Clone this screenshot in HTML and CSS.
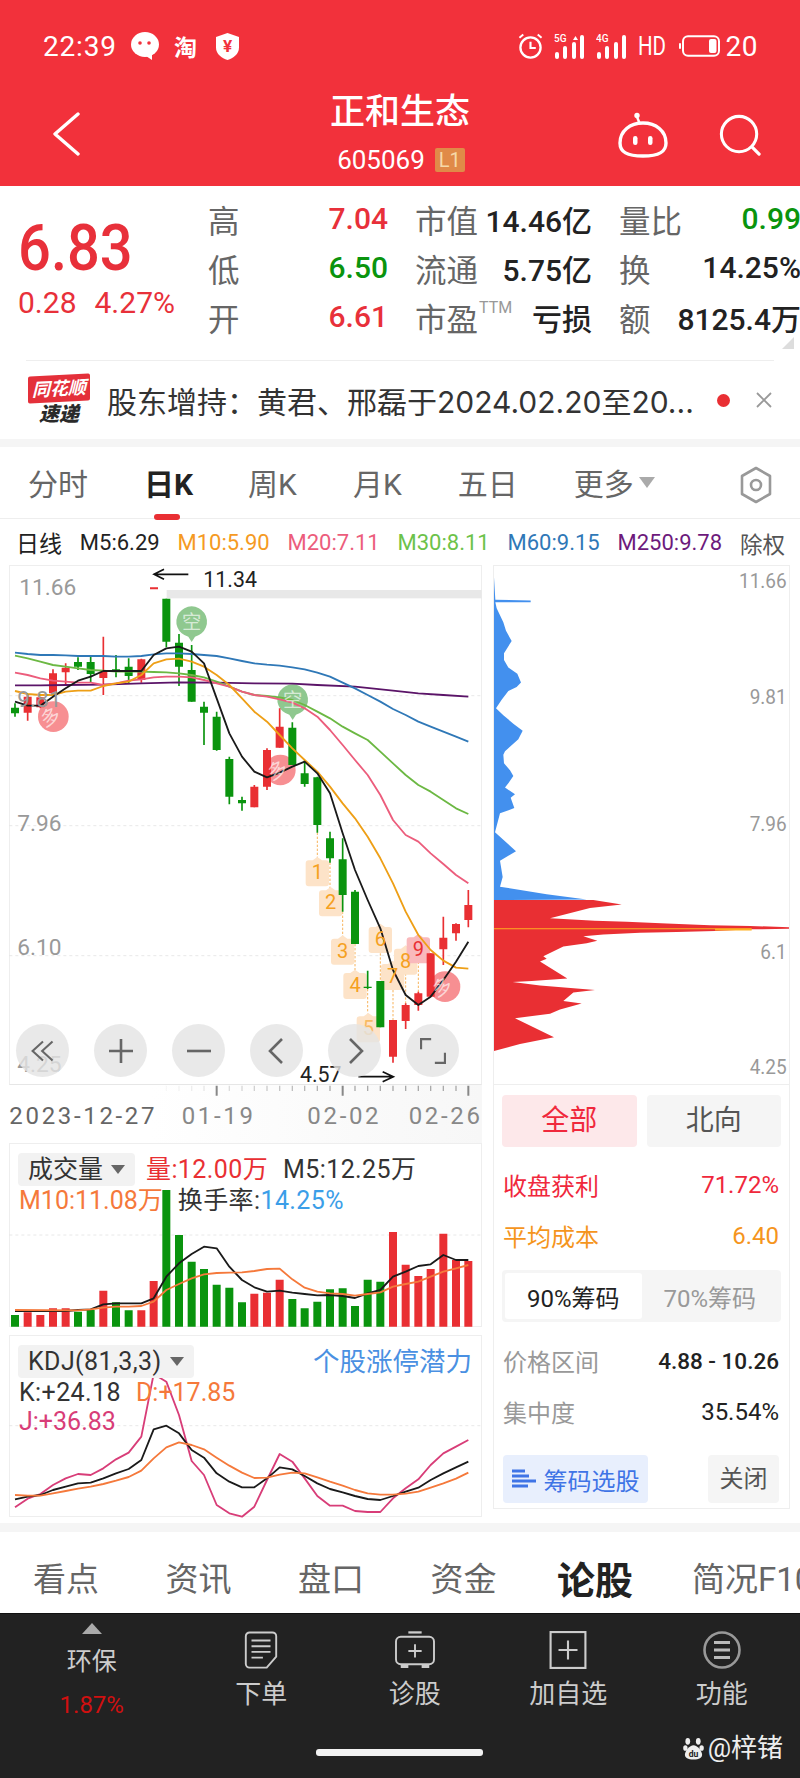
FILE: index.html
```html
<!DOCTYPE html>
<html lang="zh-CN">
<head>
<meta charset="utf-8">
<title>正和生态 605069</title>
<link rel="stylesheet" href="styles.css">
</head>
<body>
<div class="phone">

  <header class="top">
    <div class="status">
      <div class="status-left">
        <span class="clock">22:39</span>
        <svg class="ic-chat" viewBox="0 0 28 28"><ellipse cx="14" cy="12.5" rx="14" ry="12.5" fill="#fff"/><path d="M15 24l6 4v-6z" fill="#fff"/><circle cx="9" cy="11" r="1.8" fill="#f2313b"/><circle cx="18" cy="11" r="1.8" fill="#f2313b"/></svg>
        <span class="tao">淘</span>
        <svg class="ic-shield" viewBox="0 0 24 28"><path d="M12 0l12 4v11c0 7-6 11-12 13C6 26 0 22 0 15V4z" fill="#fff"/><text x="12" y="20" text-anchor="middle" class="shield-mark">¥</text></svg>
      </div>
      <div class="status-right">
        <svg class="ic-alarm" viewBox="0 0 26 28"><circle cx="13" cy="15" r="10.5" fill="none" stroke="#fff" stroke-width="2.4"/><path d="M13 9v6.500h5.500" fill="none" stroke="#fff" stroke-width="2.2"/><path d="M1.500 5l4-3.500M24.500 5l-4-3.500" stroke="#fff" stroke-width="2" fill="none"/></svg>
        <svg class="ic-signal" viewBox="0 0 31 26"><text x="0" y="9" class="net-mark">5G</text><path d="M19 7l2.500-4 2.500 4z" fill="#fff"/><rect x="1" y="19" width="4" height="7" rx="2" fill="#fff"/><rect x="9" y="13" width="4" height="13" rx="2" fill="#fff"/><rect x="18" y="9" width="4" height="17" rx="2" fill="#fff"/><rect x="26" y="2" width="4" height="24" rx="2" fill="#fff"/></svg>
        <svg class="ic-signal" viewBox="0 0 31 26"><text x="0" y="9" class="net-mark">4G</text><rect x="1" y="19" width="4" height="7" rx="2" fill="#fff"/><rect x="9" y="13" width="4" height="13" rx="2" fill="#fff"/><rect x="18" y="9" width="4" height="17" rx="2" fill="#fff"/><rect x="26" y="2" width="4" height="24" rx="2" fill="#fff"/></svg>
        <span class="hd">HD</span>
        <svg class="ic-battery" viewBox="0 0 41 22"><rect x="0" y="8" width="2" height="6" rx="1" fill="#fff"/><rect x="4" y="1.200" width="36" height="19.600" rx="5" fill="none" stroke="#fff" stroke-width="2"/><rect x="30" y="4" width="7.500" height="14" rx="2" fill="#fff"/></svg>
        <span class="charge">20</span>
      </div>
    </div>
    <nav class="titlebar">
      <svg class="ic-back" viewBox="0 0 28 44"><path d="M26 2L3 22l23 20" fill="none" stroke="#fff" stroke-width="3.400" stroke-linecap="round" stroke-linejoin="round"/></svg>
      <div class="title-block">
        <div class="stock-name">正和生态</div>
        <div class="stock-code">605069<span class="level">L1</span></div>
      </div>
      <div class="title-actions">
        <svg class="ic-robot" viewBox="0 0 50 46"><circle cx="19" cy="3.500" r="2.700" fill="#fff"/><path d="M19 5l3 7" stroke="#fff" stroke-width="2.400"/><path d="M25 11c13 0 23 8 23 20 0 9-7 13-23 13S2 40 2 31c0-12 10-20 23-20z" fill="none" stroke="#fff" stroke-width="3.400"/><rect x="15" y="24" width="4.500" height="9" rx="2.200" fill="#fff"/><rect x="30" y="24" width="4.500" height="9" rx="2.200" fill="#fff"/></svg>
        <svg class="ic-search" viewBox="0 0 44 44"><circle cx="21" cy="21" r="18.500" fill="none" stroke="#fff" stroke-width="3.200"/><path d="M35 35l7 7" stroke="#fff" stroke-width="3.400" stroke-linecap="round"/></svg>
      </div>
    </nav>
  </header>

  <section class="quote">
    <div class="price-block">
      <div class="price">6.83</div>
      <div class="change"><span>0.28</span><span>4.27%</span></div>
    </div>
    <div class="stats">
      <div class="stat"><span class="label">高</span><span class="rise">7.04</span></div>
      <div class="stat"><span class="label">市值</span><span class="plain">14.46亿</span></div>
      <div class="stat"><span class="label">量比</span><span class="fall">0.99</span></div>
      <div class="stat"><span class="label">低</span><span class="fall">6.50</span></div>
      <div class="stat"><span class="label">流通</span><span class="plain">5.75亿</span></div>
      <div class="stat"><span class="label">换</span><span class="plain">14.25%</span></div>
      <div class="stat"><span class="label">开</span><span class="rise">6.61</span></div>
      <div class="stat"><span class="label">市盈<sup class="ttm">TTM</sup></span><span class="plain">亏损</span></div>
      <div class="stat"><span class="label">额</span><span class="plain">8125.4万</span></div>
    </div>
    <i class="expand-mark"></i>
  </section>

  <section class="notice">
    <div class="notice-inner">
      <div class="brand"><span class="brand-flag">同花顺</span><span class="brand-word">速递</span></div>
      <div class="notice-text">股东增持&#xFF1A;黄君、邢磊于2024.02.20至20...</div>
      <i class="notice-dot"></i>
      <svg class="notice-close" viewBox="0 0 18 18"><path d="M2 2l14 14M16 2L2 16" stroke="#999" stroke-width="1.800"/></svg>
    </div>
  </section>

  <div class="strip"></div>

  <nav class="period-tabs">
    <span class="period">分时</span>
    <span class="period is-active">日K</span>
    <span class="period">周K</span>
    <span class="period">月K</span>
    <span class="period">五日</span>
    <span class="period">更多<i class="more-caret"></i></span>
    <svg class="ic-hex" viewBox="0 0 34 38"><path d="M17 2l14 8v18l-14 8-14-8V10z" fill="none" stroke="#999" stroke-width="2.600" stroke-linejoin="round"/><circle cx="17" cy="19" r="5" fill="none" stroke="#999" stroke-width="2.600"/></svg>
  </nav>

  <div class="ma-row">
    <span class="ma-title">日线</span>
    <span class="ma m5">M5:6.29</span>
    <span class="ma m10">M10:5.90</span>
    <span class="ma m20">M20:7.11</span>
    <span class="ma m30">M30:8.11</span>
    <span class="ma m60">M60:9.15</span>
    <span class="ma m250">M250:9.78</span>
    <span class="ma-adjust">除权</span>
  </div>

  <main class="chart-area">
    <div class="chart-left">
      <div class="panel kline">
        <svg class="plot" viewBox="30 18 1413 1554">
          <defs>
            <path id="td" d="M0-46L14-36H26Q35-36 35-27V33Q35 42 26 42H-26Q-35 42-35 33V-27Q-35-36-26-36H-14Z"/>
            <path id="bubble" d="M0 60L-10 44A46 46 0 1 1 10 44Z"/>
          </defs>

          <rect x="500" y="90" width="945" height="25" fill="#e8e8e8"/>
          <path class="grid" d="M28 407H1445M28 797H1445M28 1187H1445"/>

          <g class="buy"><circle cx="160" cy="470" r="46"/><circle cx="841" cy="630" r="46"/><circle cx="1335" cy="1280" r="46"/></g>
          <g class="sell"><use href="#bubble" x="575" y="186"/><use href="#bubble" x="878" y="420"/></g>

          <path class="td-guide" d="M952 818V895M990 908V985M1028 1055V1130M1065 1152V1230M1103 1287V1360M1141 1180V1263M1179 1290V1380M1217 1240V1335M1255 1205V1300"/>
          <g class="td-box">
            <use href="#td" x="952" y="937"/><use href="#td" x="992" y="1027"/><use href="#td" x="1028" y="1172"/>
            <use href="#td" x="1065" y="1275"/><use href="#td" x="1105" y="1405"/><use href="#td" x="1141" y="1137"/>
            <use href="#td" x="1178" y="1248"/><use href="#td" x="1217" y="1202"/>
            <use href="#td" x="1255" y="1168" class="td-top"/>
          </g>

          <!-- falling sessions -->
          <path class="wick-down" d="M45 430V470M234 292V330M272 290V368M348 285V352M386 295V370M499 116V262M537 222V378M575 255V425M612 425V555M650 455V572M688 590V733M726 710V752M877 487V615M914 600V680M952 650V818M990 815V908M1028 835V1055M1065 990V1152M1103 1232V1287M1141 1263V1402"/>
          <path class="body-down" d="M33 443h24v17h-24zM222 306h24v14h-24zM260 306h24v36h-24zM336 328h24v6h-24zM374 320h24v28h-24zM487 116h24v129h-24zM525 248h24v72h-24zM563 330h24v95h-24zM600 440h24v18h-24zM638 470h24v100h-24zM676 597h24v113h-24zM714 720h24v10h-24zM865 503h24v112h-24zM902 640h24v32h-24zM940 652h24v143h-24zM978 835h24v60h-24zM1016 898h24v107h-24zM1053 995h24v157h-24zM1091 1280h24v4h-24zM1129 1263h24v139h-24z"/>
          <!-- rising sessions -->
          <path class="wick-up" d="M83 405V482M121 410V445M159 328V410M197 310V372M310 230V405M424 296V368M763 675V742M801 565V690M839 445V563M1179 1380V1508M1217 1330V1407M1255 1295V1352M1292 1180V1310M1330 1070V1215M1368 1090V1142M1405 990V1102"/>
          <path class="body-up" d="M71 410h24v48h-24zM109 412h24v30h-24zM147 340h24v60h-24zM185 323h24v14h-24zM298 335h24v19h-24zM412 298h24v62h-24zM450 82h24v6h-24zM751 680h24v62h-24zM789 570h24v110h-24zM827 500h24v63h-24zM1167 1380h24v110h-24zM1205 1335h24v48h-24zM1243 1300h24v35h-24zM1280 1180h24v130h-24zM1318 1133h24v35h-24zM1356 1092h24v28h-24zM1393 1035h24v45h-24z"/>

          <polyline class="line l250" points="45,376 121,376 197,375 310,374 424,370 537,367 650,368 763,370 877,371 952,375 1065,380 1179,392 1255,400 1330,405 1405,410"/>
          <polyline class="line l60" points="45,278 83,282 121,285 159,285 197,286 234,288 272,288 310,288 348,290 386,290 424,288 461,283 499,280 537,280 575,282 612,285 650,288 688,295 726,303 763,310 801,314 839,317 877,322 914,328 952,338 990,350 1028,368 1065,385 1103,405 1141,425 1179,447 1217,465 1255,485 1292,500 1330,515 1368,530 1405,545"/>
          <polyline class="line l30" points="45,287 83,295 121,305 159,315 197,320 234,325 272,330 310,332 348,335 386,335 424,335 461,336 499,337 537,340 575,345 612,352 650,365 688,380 726,395 763,405 801,408 839,412 877,420 914,435 952,455 990,475 1028,500 1065,520 1103,540 1141,575 1179,610 1217,645 1255,675 1292,695 1330,720 1368,745 1405,762"/>
          <polyline class="line l20" points="45,338 83,345 121,355 159,362 197,365 234,368 272,368 310,375 348,370 386,362 424,358 461,352 499,350 537,350 575,352 612,360 650,370 688,380 726,395 763,405 801,410 839,418 877,428 914,445 952,470 990,510 1028,555 1065,600 1103,645 1141,705 1179,780 1217,825 1255,845 1292,880 1330,912 1368,945 1405,970"/>
          <polyline class="line l10" points="45,393 83,402 121,405 159,405 197,395 234,392 272,392 310,378 348,370 386,365 424,345 461,310 499,298 537,296 575,305 612,320 650,345 688,375 726,415 763,455 801,485 839,525 877,565 914,600 952,635 990,680 1028,730 1065,775 1103,830 1141,895 1179,970 1217,1055 1255,1125 1292,1170 1330,1202 1368,1223 1405,1226"/>
          <polyline class="line l5" points="45,425 83,437 121,437 159,410 197,385 234,362 272,350 310,333 348,333 386,333 424,333 461,285 499,265 537,260 575,275 612,310 650,415 688,520 726,590 763,635 801,652 839,638 877,620 914,605 952,640 990,700 1028,820 1065,930 1103,1020 1141,1105 1179,1230 1217,1305 1255,1335 1292,1310 1330,1260 1368,1205 1405,1145"/>

          <g class="mark-text">
            <text x="575" y="206">空</text><text x="878" y="440">空</text>
            <text transform="translate(160 490) rotate(-25)" x="0" y="0">多</text>
            <text transform="translate(841 650) rotate(-25)" x="0" y="0">多</text>
            <text transform="translate(1335 1300) rotate(-25)" x="0" y="0">多</text>
          </g>
          <g class="td-num">
            <text x="952" y="958">1</text><text x="992" y="1048">2</text><text x="1028" y="1193">3</text>
            <text x="1065" y="1296">4</text><text x="1105" y="1426" opacity=".6">5</text><text x="1141" y="1158">6</text>
            <text x="1178" y="1269">7</text><text x="1217" y="1223">8</text>
            <text x="1255" y="1189" class="td-red">9</text>
          </g>

          <g class="axis">
            <text x="58" y="104">11.66</text><text x="52" y="441">9.81</text>
            <text x="52" y="812">7.96</text><text x="52" y="1185">6.10</text><text x="52" y="1535">4.25</text>
          </g>

          <path class="extreme" d="M565 43H464M492 28L462 43L492 58"/>
          <text class="extreme-text" x="610" y="82">11.34</text>
          <path class="extreme" d="M1075 1550H1178M1148 1535L1180 1550L1148 1565"/>
          <text class="extreme-text" x="900" y="1565">4.57</text>
        </svg>

        <div class="chart-tools">
          <span class="tool"><svg viewBox="0 0 30 26"><path d="M15 2L3 13l12 11M26 2L14 13l12 11" fill="none" stroke="#666" stroke-width="2.400"/></svg></span>
          <span class="tool"><svg viewBox="0 0 26 26"><path d="M13 1v24M1 13h24" stroke="#666" stroke-width="2.600"/></svg></span>
          <span class="tool"><svg viewBox="0 0 26 26"><path d="M1 13h24" stroke="#666" stroke-width="2.600"/></svg></span>
          <span class="tool"><svg viewBox="0 0 26 26"><path d="M18 1L6 13l12 12" fill="none" stroke="#666" stroke-width="2.600"/></svg></span>
          <span class="tool"><svg viewBox="0 0 26 26"><path d="M8 1l12 12L8 25" fill="none" stroke="#666" stroke-width="2.600"/></svg></span>
          <span class="tool"><svg viewBox="0 0 28 28"><path d="M1 12V1h11M27 16v11H16" fill="none" stroke="#666" stroke-width="2.600"/></svg></span>
        </div>
      </div>

      <svg class="date-axis" viewBox="27 0 1419 174">
        <defs>
          <linearGradient id="axisFade" gradientUnits="userSpaceOnUse" x1="440" y1="0" x2="1000" y2="0">
            <stop offset="0" stop-color="#bbb" stop-opacity="0"/><stop offset="1" stop-color="#aaa"/>
          </linearGradient>
          <linearGradient id="axisShade" x1="0" y1="0" x2="1" y2="0">
            <stop offset=".3" stop-color="#fff"/><stop offset="1" stop-color="#f7f7f7"/>
          </linearGradient>
        </defs>
        <rect x="27" y="0" width="1419" height="174" fill="url(#axisShade)"/>
        <path class="tick" stroke="url(#axisFade)" d="M499 2V18M537 2V18M575 2V18M612 2V18M688 2V18M726 2V18M763 2V18M801 2V18M839 2V18M877 2V18M914 2V18M952 2V18M990 2V18M1065 2V18M1103 2V18M1141 2V18M1179 2V18M1217 2V18M1255 2V18M1292 2V18M1330 2V18M1368 2V18"/>
        <path class="tick-major" d="M650 2V32M1028 2V32M1405 2V32"/>
        <text class="date first" x="28" y="117">2023-12-27</text>
        <text class="date" x="545" y="117">01-19</text>
        <text class="date" x="922" y="117">02-02</text>
        <text class="date" x="1226" y="117">02-26</text>
      </svg>

      <div class="panel volume">
        <svg class="plot" viewBox="30 42 1413 546">
          <path class="grid" d="M28 315H1445"/>
          <path class="bar-down" d="M33 555h24V590h-24zM222 545h24V590h-24zM260 540h24V590h-24zM336 517h24V590h-24zM374 541h24V590h-24zM487 180h24V590h-24zM525 315h24V590h-24zM563 395h24V590h-24zM600 417h24V590h-24zM638 464h24V590h-24zM676 473h24V590h-24zM714 517h24V590h-24zM865 507h24V590h-24zM902 535h24V590h-24zM940 515h24V590h-24zM978 478h24V590h-24zM1016 475h24V590h-24zM1053 528h24V590h-24zM1091 449h24V590h-24zM1129 455h24V590h-24z"/>
          <path class="bar-up" d="M71 547h24V590h-24zM109 555h24V590h-24zM147 535h24V590h-24zM185 535h24V590h-24zM298 482h24V590h-24zM412 541h24V590h-24zM449 453h24V590h-24zM751 491h24V590h-24zM789 488h24V590h-24zM827 449h24V590h-24zM1167 306h24V590h-24zM1205 404h24V590h-24zM1243 438h24V590h-24zM1280 417h24V590h-24zM1318 311h24V590h-24zM1356 390h24V590h-24zM1393 393h24V590h-24z"/>
          <polyline class="line lblack" points="45,543 83,543 121,543 159,543 197,543 234,540 272,538 310,523 348,520 386,520 424,520 461,505 499,440 537,400 575,372 612,350 650,355 688,410 726,450 763,472 801,485 839,482 877,488 914,492 952,496 990,495 1028,498 1065,504 1103,490 1141,480 1179,440 1217,425 1255,408 1292,403 1330,375 1368,390 1405,390"/>
          <polyline class="line lorange" points="45,540 234,541 272,538 310,533 348,530 386,530 424,528 461,515 499,480 537,462 575,445 612,433 650,429 688,428 726,427 763,423 801,417 839,416 877,448 914,473 952,485 990,490 1028,492 1065,497 1103,492 1141,487 1179,470 1217,462 1255,455 1292,440 1330,425 1368,415 1405,405"/>
        </svg>
        <div class="legend">
          <div class="legend-row">
            <span class="chip">成交量<i class="caret"></i></span>
            <span class="v-red">量:12.00万</span>
            <span class="v-dark">M5:12.25万</span>
          </div>
          <div class="legend-row tight">
            <span class="v-orange">M10:11.08万</span>
            <span class="v-dark">换手率:<span class="v-sky">14.25%</span></span>
          </div>
        </div>
      </div>

      <div class="panel kdj">
        <svg class="plot" viewBox="30 618 1413 540">
          <path class="grid" d="M28 887H1445"/>
          <polyline class="line lmagenta" points="45,1132 83,1106 121,1092 159,1065 197,1045 234,1032 272,1035 310,1015 348,988 386,968 424,920 461,732 499,755 537,855 575,993 612,1035 650,1125 688,1150 726,1160 763,1130 801,1050 839,972 877,995 914,1045 952,1098 990,1127 1028,1127 1065,1143 1103,1146 1141,1146 1179,1105 1217,1075 1255,1048 1292,1005 1330,970 1368,950 1405,930"/>
          <polyline class="line lblack" points="45,1108 83,1100 121,1095 159,1080 197,1070 234,1060 272,1058 310,1045 348,1030 386,1017 424,990 461,898 499,887 537,910 575,960 612,983 650,1030 688,1055 726,1072 763,1072 801,1045 839,1012 877,1018 914,1038 952,1060 990,1077 1028,1087 1065,1098 1103,1107 1141,1110 1179,1098 1217,1085 1255,1073 1292,1050 1330,1030 1368,1012 1405,995"/>
          <polyline class="line lorange" points="45,1095 83,1097 121,1097 159,1090 197,1083 234,1076 272,1070 310,1062 348,1052 386,1041 424,1022 461,985 499,952 537,937 575,945 612,958 650,983 688,1007 726,1028 763,1044 801,1043 839,1034 877,1028 914,1030 952,1042 990,1055 1028,1067 1065,1080 1103,1090 1141,1094 1179,1094 1217,1091 1255,1085 1292,1073 1330,1060 1368,1046 1405,1028"/>
        </svg>
        <div class="legend">
          <div class="legend-row spread">
            <span class="chip chip-kdj">KDJ(81,3,3)<i class="caret"></i></span>
            <span class="limit-link">个股涨停潜力</span>
          </div>
          <div class="legend-row tight">
            <span class="v-dark">K:+24.18</span>
            <span class="v-orange">D:+17.85</span>
          </div>
          <div class="legend-row tight"><span class="v-pink">J:+36.83</span></div>
        </div>
      </div>
    </div>

    <aside class="chips">
      <svg class="chip-plot" viewBox="42 17 885 1504" preserveAspectRatio="none">
        <polygon fill="#4390ee" points="42,50 46,115 152,117 152,122 46,122 50,140 70,180 78,205 95,235 72,270 72,290 85,312 112,330 123,355 110,368 85,380 65,405 48,430 70,450 100,475 128,495 115,520 75,555 70,565 72,590 90,610 100,627 85,648 75,660 105,680 92,690 103,720 60,735 45,790 108,845 60,873 68,920 60,948 200,970 320,985 42,987"/>
        <polygon fill="#e92f33" points="42,987 340,987 425,1000 330,1010 210,1040 345,1047 440,1050 560,1055 690,1060 810,1062 930,1066 930,1070 815,1072 705,1077 590,1080 480,1082 370,1087 310,1092 352,1105 320,1112 250,1122 190,1150 200,1157 180,1165 262,1215 155,1222 98,1225 180,1235 345,1248 280,1255 250,1280 305,1287 240,1305 210,1317 105,1330 222,1385 120,1405 42,1425"/>
        <path d="M42 1070H815" stroke="#ffb020" stroke-width="3"/>
        <path d="M705 1073H815" stroke="#ffb020" stroke-width="5"/>
        <g class="chip-axis">
          <text x="920" y="82">11.66</text><text x="920" y="419">9.81</text><text x="920" y="787">7.96</text>
          <text x="920" y="1159">6.1</text><text x="920" y="1491">4.25</text>
        </g>
      </svg>
      <div class="chip-panel">
        <div class="seg-row">
          <span class="seg is-on">全部</span>
          <span class="seg">北向</span>
        </div>
        <div class="kv kv-red"><span>收盘获利</span><span>71.72%</span></div>
        <div class="kv kv-orange"><span>平均成本</span><span>6.40</span></div>
        <div class="toggle">
          <span class="toggle-opt is-on">90%筹码</span>
          <span class="toggle-opt">70%筹码</span>
        </div>
        <div class="kv kv-plain range"><span>价格区间</span><span class="range-val">4.88 - 10.26</span></div>
        <div class="kv kv-plain conc"><span>集中度</span><span>35.54%</span></div>
        <div class="chip-actions">
          <span class="pick"><svg viewBox="0 0 24 20"><path d="M0 2h13M0 7h17M0 12h24M0 17h16" stroke="#3f74e6" stroke-width="2.800"/></svg>筹码选股</span>
          <span class="close">关闭</span>
        </div>
      </div>
    </aside>
  </main>

  <div class="strip strip-low"></div>

  <nav class="info-tabs">
    <span class="info-tab">看点</span>
    <span class="info-tab">资讯</span>
    <span class="info-tab">盘口</span>
    <span class="info-tab">资金</span>
    <span class="info-tab is-active">论股</span>
    <span class="info-tab">简况F10</span>
  </nav>

  <footer class="actionbar">
    <div class="action sector">
      <i class="sector-up"></i>
      <span class="sector-name">环保</span>
      <span class="sector-rate">1.87%</span>
    </div>
    <div class="action">
      <svg class="act-icon" viewBox="0 0 36 40"><path d="M6 1.500h24a4 4 0 0 1 4 4V27L24 38.500H6a4 4 0 0 1-4-4v-29a4 4 0 0 1 4-4z" fill="none" stroke="#ccc" stroke-width="2"/><path d="M8 10h20M8 16h20M8 22h20M8 28h12" stroke="#ccc" stroke-width="2"/></svg>
      <span class="act-label">下单</span>
    </div>
    <div class="action">
      <svg class="act-icon" viewBox="0 0 44 40"><path d="M15 1.500h14" stroke="#ccc" stroke-width="2.400"/><rect x="2" y="6" width="40" height="29" rx="5" fill="none" stroke="#ccc" stroke-width="2"/><path d="M22 14v14M15 21h14" stroke="#ccc" stroke-width="2"/><path d="M7 35h8v4H7zM29 35h8v4h-8z" fill="#ccc"/></svg>
      <span class="act-label">诊股</span>
    </div>
    <div class="action">
      <svg class="act-icon" viewBox="0 0 36 36"><rect x="1.500" y="1" width="33" height="34" fill="none" stroke="#ccc" stroke-width="2"/><path d="M18 9v18M9 18h18" stroke="#ccc" stroke-width="2"/></svg>
      <span class="act-label">加自选</span>
    </div>
    <div class="action">
      <svg class="act-icon" viewBox="0 0 38 38"><circle cx="19" cy="19" r="17.500" fill="none" stroke="#999" stroke-width="2.600"/><path d="M11 11.500h16M11 19h16M11 26.500h16" stroke="#bbb" stroke-width="3"/></svg>
      <span class="act-label">功能</span>
    </div>
    <i class="home-bar"></i>
    <div class="credit">
      <svg class="paw" viewBox="0 0 22 24"><ellipse cx="5" cy="5" rx="2.500" ry="3.500" fill="#eee"/><ellipse cx="16" cy="5" rx="2.500" ry="3.500" fill="#eee"/><ellipse cx="2.500" cy="12" rx="2.300" ry="3" fill="#eee"/><ellipse cx="19.500" cy="12" rx="2.300" ry="3" fill="#eee"/><path d="M11 9c4 0 9 6 9 10 0 3-3 5-9 5s-9-2-9-5c0-4 5-10 9-10z" fill="#eee"/><text x="11" y="21" text-anchor="middle" class="paw-mark">du</text></svg>
      <span>@梓锗</span>
    </div>
  </footer>
</div>
</body>
</html>
```

FILE: styles.css
```css
* { box-sizing: border-box; }

html, body { margin: 0; padding: 0; background: #fff; }

body {
  font-family: Roboto, "Noto Sans CJK SC", sans-serif;
  color: #222;
}

.phone {
  width: 800px;
  height: 1778px;
  overflow: hidden;
  display: flex;
  flex-direction: column;
}

i { display: block; }

/* red header */
.top { height: 186px; background: #f2313b; color: #fff; flex: none; }

.status {
  height: 92px;
  padding: 0 42px 0 43px;
  display: flex;
  justify-content: space-between;
  align-items: center;
}

.status-left, .status-right { display: flex; align-items: center; }

.clock { font-size: 28px; letter-spacing: .8px; width: 88px; }
.ic-chat { width: 28px; height: 28px; }
.tao { font-size: 23px; font-weight: 700; margin-left: 15px; width: 42px; }
.ic-shield { width: 23px; height: 27px; }
.shield-mark { font: 700 18px Roboto, sans-serif; fill: #f2313b; }

.ic-alarm { width: 25px; height: 27px; margin-right: 11px; }
.ic-signal { width: 31px; height: 26px; margin-right: 11px; }
.net-mark { font: 500 10px Roboto, sans-serif; fill: #fff; }
.hd { font-size: 25px; width: 41px; transform: scaleX(.82); transform-origin: left center; white-space: nowrap; }
.ic-battery { width: 41px; height: 22px; }
.charge { font-size: 28px; margin-left: 6px; letter-spacing: .5px; }

.titlebar {
  height: 94px;
  position: relative;
  display: flex;
  justify-content: center;
}

.ic-back { position: absolute; left: 52px; top: 20px; width: 28px; height: 44px; }

.title-block { text-align: center; }
.stock-name { font-size: 35px; font-weight: 500; line-height: 42px; }

.stock-code {
  font-size: 26px;
  line-height: 28px;
  margin-top: 12px;
  display: flex;
  justify-content: center;
  align-items: center;
  gap: 10px;
  padding-left: 2px;
}

.level {
  width: 30px;
  height: 24px;
  background: #e08a48;
  color: #f6d9a8;
  font-size: 20px;
  line-height: 24px;
  border-radius: 2px;
}

.title-actions {
  position: absolute;
  right: 39px;
  top: 20px;
  display: flex;
  gap: 51px;
  align-items: flex-end;
}

.ic-robot { width: 50px; height: 46px; }
.ic-search { width: 42px; height: 42px; margin-bottom: 2px; }

/* price summary */
.quote {
  height: 174px;
  flex: none;
  padding: 8px 0 0 18px;
  display: flex;
  position: relative;
}

.price-block { width: 190px; flex: none; }

.price {
  font-size: 65px;
  font-weight: 500;
  line-height: 70px;
  color: #e8303a;
  margin-top: 19px;
  transform: scaleX(.89);
  transform-origin: left center;
}

.change {
  font-size: 30px;
  line-height: 36px;
  color: #e8303a;
  display: flex;
  gap: 18px;
  margin-top: 2px;
  white-space: nowrap;
}

.stats {
  width: 592px;
  display: grid;
  grid-template-columns: 180px 177px 182px;
  column-gap: 27px;
  grid-auto-rows: 49px;
  font-size: 30px;
  white-space: nowrap;
}

.stat { display: flex; justify-content: space-between; align-items: center; }
.label { color: #666; font-size: 31.500px; }
.rise { color: #e8303a; font-weight: 500; }
.fall { color: #0a940e; font-weight: 500; }
.plain { color: #222; font-weight: 500; }

.ttm { font-size: 16px; color: #999; vertical-align: top; line-height: 28px; margin-left: 1px; }

.expand-mark {
  position: absolute;
  right: 6px;
  bottom: 11px;
  width: 0;
  height: 0;
  border-style: solid;
  border-width: 0 0 12px 12px;
  border-color: transparent transparent #ddd transparent;
}

/* news flash line */
.notice { height: 79px; flex: none; padding: 0 26px; }

.notice-inner {
  height: 100%;
  border-top: 1px solid #eee;
  display: flex;
  align-items: center;
  position: relative;
}

.brand { width: 62px; margin-left: 2px; flex: none; text-align: center; }

.brand-flag {
  display: block;
  background: #e4303a;
  color: #fff;
  font-size: 18px;
  line-height: 27px;
  font-weight: 700;
  font-style: italic;
  border-radius: 2px;
  transform: skewY(-3deg);
  white-space: nowrap;
  overflow: hidden;
}

.brand-word {
  display: block;
  font-size: 20px;
  line-height: 24px;
  font-weight: 900;
  font-style: italic;
  color: #2a2a2a;
}

.notice-text {
  font-family: Inter, "Noto Sans CJK SC", sans-serif;
  font-size: 30px;
  color: #333;
  margin-left: 17px;
  white-space: nowrap;
  flex: 1;
}

.notice-dot { width: 13px; height: 13px; border-radius: 50%; background: #e92f33; margin-right: 25px; }
.notice-close { width: 18px; height: 18px; margin-right: 1px; }

.strip { height: 8px; background: #f5f5f5; flex: none; }
.strip-low { height: 9px; }

/* chart period tabs */
.period-tabs {
  height: 72px;
  flex: none;
  border-bottom: 1px solid #eee;
  padding: 5px 0 0 28px;
  display: flex;
  align-items: center;
  gap: 56px;
  position: relative;
  font-size: 30px;
  color: #666;
}

.period { display: flex; align-items: center; position: relative; line-height: 42px; white-space: nowrap; }

.period.is-active { font-weight: 700; color: #222; margin: 0 -1px 0 0; }

.period.is-active::after {
  content: "";
  position: absolute;
  left: 10px;
  right: 13px;
  bottom: -14px;
  height: 6px;
  border-radius: 3px;
  background: #e92f33;
}

.more-caret {
  width: 0;
  height: 0;
  border-style: solid;
  border-width: 11px 8px 0 8px;
  border-color: #aaa transparent transparent transparent;
  margin-left: 5px;
  margin-top: -6px;
}

.ic-hex { position: absolute; right: 27px; top: 19px; width: 34px; height: 38px; }

/* moving average readout */
.ma-row {
  height: 46px;
  flex: none;
  padding: 0 15px 0 16px;
  display: flex;
  align-items: center;
  font-size: 22px;
  white-space: nowrap;
  justify-content: space-between;
}

.ma-title { color: #222; font-size: 23px; }
.ma-adjust { color: #555; font-size: 22.500px; padding-top: 2px; }
.m5 { color: #222; }
.m10 { color: #f59a23; }
.m20 { color: #ec5d7c; }
.m30 { color: #6cc24a; }
.m60 { color: #2f78b7; }
.m250 { color: #6d1a7c; }

/* chart column and chip column */
.chart-area {
  height: 958px;
  flex: none;
  padding: 0 10px 0 9px;
  display: flex;
  gap: 11px;
}

.chart-left { width: 473px; flex: none; display: flex; flex-direction: column; }

.panel {
  position: relative;
  border: 1px solid #eee;
  flex: none;
}

.plot { display: block; width: 100%; height: 100%; overflow: visible; }

.kline { height: 520px; border-bottom-color: #e6e6e6; }

.grid { stroke: #ddd; stroke-width: 2; stroke-dasharray: 9 9; fill: none; }

.wick-down { stroke: #0a940e; stroke-width: 5; fill: none; }
.body-down { fill: #0a940e; }
.wick-up { stroke: #e92f33; stroke-width: 5; fill: none; }
.body-up { fill: #e92f33; }

.line { fill: none; stroke-width: 5.500; stroke-linejoin: round; }
.l5, .lblack { stroke: #1a1a1a; }
.l10 { stroke: #ee9f16; }
.l20 { stroke: #ec5d7c; }
.l30 { stroke: #6cb843; }
.l60 { stroke: #2f78b7; }
.l250 { stroke: #5b1468; }
.lorange { stroke: #f5793b; }
.lmagenta { stroke: #d83d78; }

.buy { fill: #f78f92; }
.sell { fill: #8fc88f; }

.mark-text text {
  font: 58px "Noto Sans CJK SC", sans-serif;
  fill: #fff;
  fill-opacity: .65;
  text-anchor: middle;
}

.td-box { fill: #fde3c8; }
.td-top { fill: #f9b9bc; }
.td-guide { stroke: #f5a33a; stroke-width: 2.500; stroke-dasharray: 7 5; fill: none; }

.td-num text {
  font: 60px Roboto, sans-serif;
  fill: #f5a020;
  text-anchor: middle;
}

.td-num .td-red { fill: #e92f33; }

.axis text {
  font: 68px Roboto, sans-serif;
  fill: #999;
}

.extreme { stroke: #111; stroke-width: 5; fill: none; }
.extreme-text { font: 64px Roboto, sans-serif; fill: #222; }

.chart-tools {
  position: absolute;
  left: 6px;
  bottom: 7px;
  display: flex;
  gap: 25px;
}

.tool {
  width: 53px;
  height: 53px;
  border-radius: 50%;
  background: rgba(228, 228, 228, .8);
  display: flex;
  align-items: center;
  justify-content: center;
}

.tool svg { width: 26px; height: 26px; }

.date-axis { display: block; width: 473px; height: 58px; flex: none; overflow: visible; }

.tick { stroke-width: 4; fill: none; }
.tick-major { stroke: #888; stroke-width: 6; fill: none; }

.date { font: 72px Roboto, sans-serif; fill: #888; letter-spacing: 8px; }
.date.first { fill: #666; }

.volume { height: 184px; }
.kdj { height: 182px; margin-top: 8px; }

.bar-down { fill: #0a940e; }
.bar-up { fill: #e92f33; }

.legend {
  position: absolute;
  left: 8px;
  right: 8px;
  top: 9px;
  font-size: 25px;
  line-height: 29px;
  white-space: nowrap;
}

.legend-row { display: flex; align-items: center; gap: 15px; }
.legend-row.tight { padding-left: 1px; }
.legend-row.spread { justify-content: space-between; padding-right: 1px; }

.chip {
  height: 33px;
  display: flex;
  align-items: center;
  background: #f2f2f2;
  color: #333;
  padding: 0 10px;
  border-radius: 4px;
}

.chip-kdj { letter-spacing: .4px; }

.caret {
  width: 0;
  height: 0;
  border-style: solid;
  border-width: 9px 7px 0 7px;
  border-color: #666 transparent transparent transparent;
  margin-left: 8px;
}

.v-red { color: #e92f33; margin-left: -4px; letter-spacing: .4px; }
.v-dark { color: #333; letter-spacing: .4px; }
.v-orange { color: #f5793b; }
.v-sky { color: #3b9ee8; }
.v-pink { color: #d83d78; }
.limit-link { color: #4a90e2; font-size: 26.500px; }

/* chip distribution */
.chips {
  width: 297px;
  height: 944px;
  flex: none;
  border: 1px solid #eee;
  display: flex;
  flex-direction: column;
}

.chip-plot { display: block; width: 100%; height: 519px; flex: none; border-bottom: 1px solid #eee; }

.chip-axis text { font: 57px Roboto, sans-serif; fill: #999; text-anchor: end; }

.chip-panel { padding: 10px 8px 0 8px; font-size: 24px; flex: 1; }

.seg-row { display: flex; gap: 10px; }

.seg {
  flex: 1;
  height: 52px;
  line-height: 52px;
  text-align: center;
  font-size: 28px;
  background: #f5f5f5;
  color: #555;
  border-radius: 4px;
}

.seg.is-on { background: #fde8ea; color: #f0283c; }

.kv { display: flex; justify-content: space-between; align-items: center; padding: 0 2px 0 1px; height: 51px; }
.seg-row + .kv { margin-top: 12px; }
.kv-red { color: #f0283c; }
.kv-orange { color: #f5951d; }
.kv-plain span:first-child { color: #999; }
.kv-plain span:last-child { color: #222; }
.range-val { font-size: 22.500px; font-weight: 500; }
.range { margin-top: 13px; }

.toggle {
  margin-top: 9px;
  height: 52px;
  background: #f5f5f5;
  border-radius: 4px;
  padding: 3px;
  display: flex;
  font-size: 24px;
}

.toggle-opt { flex: 1; display: flex; align-items: center; justify-content: center; color: #999; }
.toggle-opt.is-on { background: #fff; color: #222; border-radius: 3px; }

.chip-actions { margin-top: 18px; display: flex; justify-content: space-between; padding: 0 2px 0 1px; }

.pick {
  width: 145px;
  height: 48px;
  background: #e8effd;
  color: #3f74e6;
  border-radius: 4px;
  display: flex;
  align-items: center;
  justify-content: center;
  gap: 8px;
  white-space: nowrap;
}

.pick svg { width: 24px; height: 20px; }

.close {
  width: 71px;
  height: 48px;
  line-height: 48px;
  background: #f5f5f5;
  color: #555;
  text-align: center;
  border-radius: 4px;
}

/* lower tabs */
.info-tabs {
  height: 81px;
  flex: none;
  display: flex;
  align-items: center;
  position: relative;
  font-size: 33px;
  color: #666;
  white-space: nowrap;
  padding: 9px 0 0 33px;
  overflow: hidden;
}

.info-tab { margin-right: 66.500px; }

.info-tab.is-active {
  font-size: 38px;
  font-weight: 700;
  color: #222;
  margin: 0 59px 0 -6px;
  position: relative;
}

.info-tab.is-active::after {
  content: "";
  position: absolute;
  left: 18px;
  right: 18px;
  bottom: -16px;
  height: 3px;
  border-radius: 2px 2px 0 0;
  background: #e92f33;
}

/* dark action bar */
.actionbar {
  flex: 1;
  background: #222;
  border-top: 1px solid #111;
  position: relative;
  display: flex;
  padding: 17px 0 0 15px;
  color: #ccc;
}

.action {
  width: 153.500px;
  display: flex;
  flex-direction: column;
  align-items: center;
}

.action.sector { margin-right: 16px; }

.act-icon { height: 38px; width: 44px; }
.act-label { font-size: 26px; line-height: 36px; margin-top: 7px; white-space: nowrap; }

.sector-up {
  width: 0;
  height: 0;
  border-style: solid;
  border-width: 0 10px 11px 10px;
  border-color: transparent transparent #aaa transparent;
  margin-top: -8px;
}

.sector-name { font-size: 25px; line-height: 36px; margin-top: 10px; }
.sector-rate { font-size: 24px; line-height: 32px; margin-top: 9px; color: #d01010; }

.home-bar {
  position: absolute;
  left: 316px;
  top: 135px;
  width: 167px;
  height: 7px;
  border-radius: 3px;
  background: #f2f2f2;
}

.credit {
  position: absolute;
  right: 17px;
  top: 117px;
  display: flex;
  align-items: center;
  gap: 4px;
  font-size: 26px;
  line-height: 34px;
  color: #eee;
}

.paw { width: 21px; height: 24px; }
.paw-mark { font: 700 9px Roboto, sans-serif; fill: #222; }
```
